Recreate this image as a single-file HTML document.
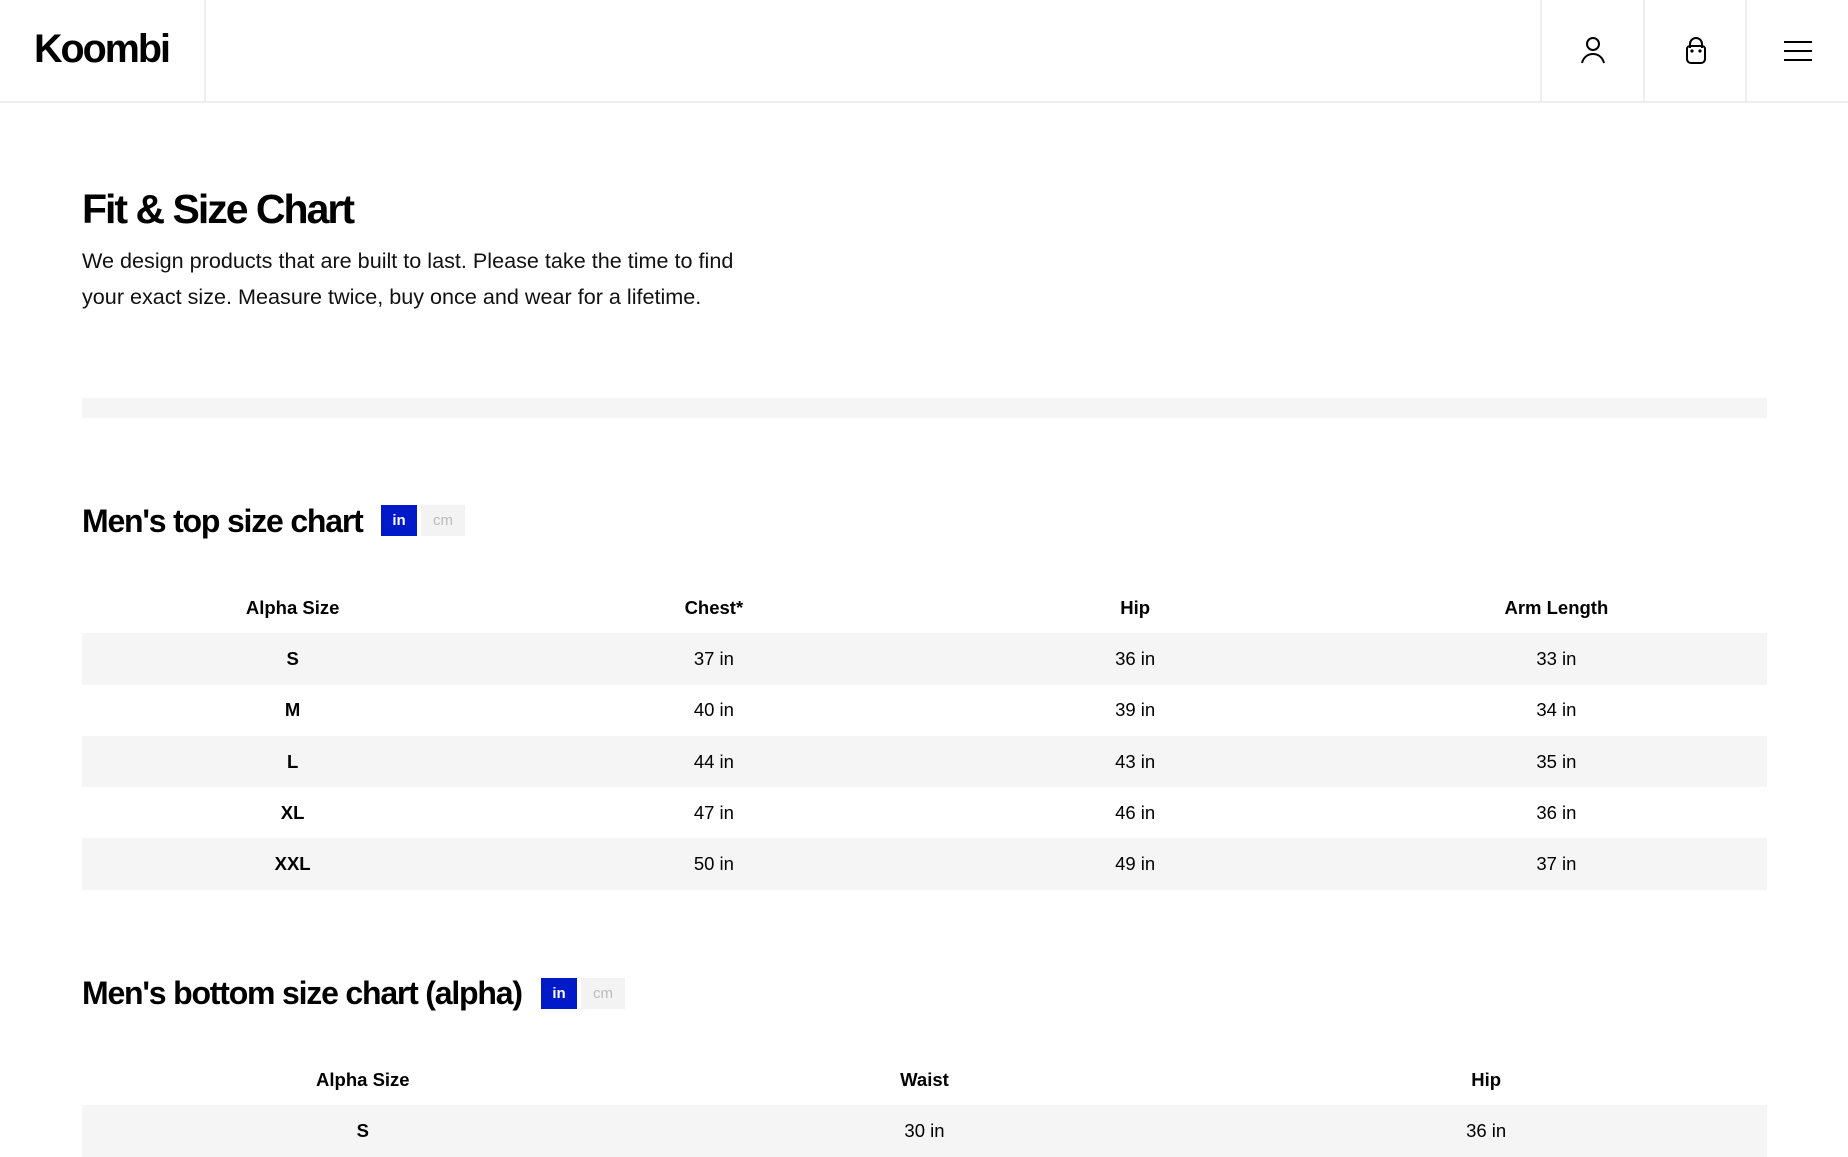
<!DOCTYPE html>
<html><head><meta charset="utf-8"><style>
*{margin:0;padding:0;box-sizing:border-box}
body{width:1848px;height:1155px;overflow:hidden;background:#fff;font-family:"Liberation Sans",sans-serif;color:#000}
.hdr{position:absolute;left:0;top:0;width:1848px;height:103px;border-bottom:2px solid #eee}
.logo{position:absolute;left:34px;top:27px;font-size:39.5px;font-weight:bold;letter-spacing:-2px}
.vl{position:absolute;top:0;width:2px;height:102px;background:#eee}
.ic{position:absolute;top:0;width:103px;height:102px;display:flex;align-items:center;justify-content:center}
h1{position:absolute;left:82px;top:186px;font-size:41px;font-weight:bold;letter-spacing:-2px}
.p{position:absolute;left:82px;top:243px;font-size:21.6px;line-height:36px;width:690px;color:#111}
.bar{position:absolute;left:82px;top:398px;width:1685px;height:20px;background:#f5f5f5}
h2{position:absolute;left:82px;font-size:32px;font-weight:bold;letter-spacing:-1.2px}
.tg{position:absolute;height:31px;font-size:15px;font-weight:bold;display:flex;align-items:center;justify-content:center}
.in{background:#0019c9;color:#fff;width:36px}
.cm{background:#f3f3f3;color:#bbb;width:44px;font-weight:normal}
table{position:absolute;left:82px;width:1685px;border-collapse:collapse;table-layout:fixed}
td,th{text-align:center;height:51.3px;font-size:18.5px}
th{font-weight:bold}
td:first-child{font-weight:bold}
tr.g td{background:#f5f5f5}
</style></head><body>
<div class="hdr">
<div class="logo">Koombi</div>
<div class="vl" style="left:204px"></div>
<div class="vl" style="left:1540px"></div>
<div class="vl" style="left:1643px"></div>
<div class="vl" style="left:1745px"></div>
<div class="ic" style="left:1541px"><svg width="30" height="32" viewBox="0 0 30 32" fill="none" stroke="#000" stroke-width="2"><circle cx="15" cy="9" r="6"/><path d="M4 28c1.5-6 6-9 11-9s9.5 3 11 9"/></svg></div>
<div class="ic" style="left:1644px"><svg width="30" height="32" viewBox="0 0 30 32" fill="none" stroke="#000" stroke-width="2"><path d="M9 13V9a6 6 0 0 1 12 0v4"/><path d="M6 14c0-2 1.5-3 3-3h12c1.5 0 3 1 3 3v10c0 2.5-2 4-4 4H10c-2 0-4-1.5-4-4z"/><circle cx="11" cy="16" r=".6" fill="#000"/><circle cx="19" cy="16" r=".6" fill="#000"/></svg></div>
<div class="ic" style="left:1746px"><svg width="30" height="24" viewBox="0 0 30 24" stroke="#000" stroke-width="2"><path d="M1 3h28M1 12h28M1 21h28"/></svg></div>
</div>
<h1>Fit &amp; Size Chart</h1>
<div class="p">We design products that are built to last. Please take the time to find<br>your exact size. Measure twice, buy once and wear for a lifetime.</div>
<div class="bar"></div>
<h2 style="top:503px">Men's top size chart</h2>
<div class="tg in" style="left:381px;top:505px">in</div>
<div class="tg cm" style="left:421px;top:505px">cm</div>
<table style="top:582px">
<tr><th>Alpha Size</th><th>Chest*</th><th>Hip</th><th>Arm Length</th></tr>
<tr class="g"><td>S</td><td>37 in</td><td>36 in</td><td>33 in</td></tr>
<tr><td>M</td><td>40 in</td><td>39 in</td><td>34 in</td></tr>
<tr class="g"><td>L</td><td>44 in</td><td>43 in</td><td>35 in</td></tr>
<tr><td>XL</td><td>47 in</td><td>46 in</td><td>36 in</td></tr>
<tr class="g"><td>XXL</td><td>50 in</td><td>49 in</td><td>37 in</td></tr>
</table>
<h2 style="top:975px">Men's bottom size chart (alpha)</h2>
<div class="tg in" style="left:541px;top:978px">in</div>
<div class="tg cm" style="left:581px;top:978px">cm</div>
<table style="top:1054px">
<tr><th>Alpha Size</th><th>Waist</th><th>Hip</th></tr>
<tr class="g"><td>S</td><td>30 in</td><td>36 in</td></tr>
</table>
</body></html>
